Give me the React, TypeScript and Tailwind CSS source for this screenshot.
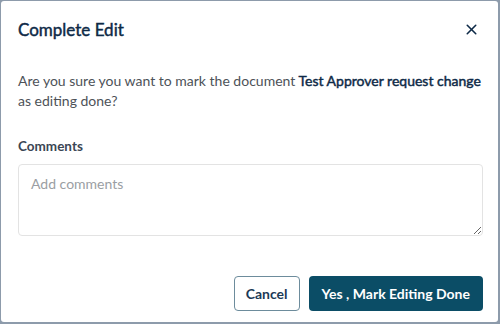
import { X } from "lucide-react";

export default function App() {
  return (
    <div className="w-[500px] h-[324px] bg-[#8d9bab] pt-px pl-px pr-[2px] pb-[2px] font-['Lato','Liberation_Sans',sans-serif]">
      <div className="h-full bg-white rounded-[3px] flex flex-col pl-[17px] pr-[15px]">
        {/* Header */}
        <div className="flex items-center justify-between h-[57px]">
          <h2 className="text-[17px] font-normal text-[#0e2a47] [-webkit-text-stroke:0.45px_#0e2a47]">Complete Edit</h2>
          <button className="text-[#0e2a47] mr-[3px]">
            <X size={17} strokeWidth={2.2} />
          </button>
        </div>

        {/* Body */}
        <p className="mt-[13px] text-[14px] leading-[20px] text-[#4d5258]">
          Are you sure you want to mark the document{" "}
          <span className="text-[#0e2a47] [-webkit-text-stroke:0.45px_#0e2a47]">Test Approver request change</span> as
          editing done?
        </p>

        <label className="mt-[25px] text-[13.5px] font-bold text-[#3a4654]">Comments</label>
        <textarea
          placeholder="Add comments"
          className="mt-[8px] h-[72px] w-full resize-y rounded-[4px] border border-[#e3e3e3] px-[12px] py-[8px] text-[14px] text-[#333] placeholder:text-[#9a9ea3] outline-none"
        />

        {/* Footer */}
        <div className="mt-auto mb-[11px] flex justify-end gap-[9px]">
          <button className="h-[35px] px-[11px] rounded-[4px] border-[1.5px] border-[#6d8c9c] text-[14px] font-bold text-[#1b3a56]">
            Cancel
          </button>
          <button className="h-[35px] px-[13px] rounded-[4px] bg-[#0b4d66] text-[14px] font-bold text-white">
            Yes , Mark Editing Done
          </button>
        </div>
      </div>
    </div>
  );
}
